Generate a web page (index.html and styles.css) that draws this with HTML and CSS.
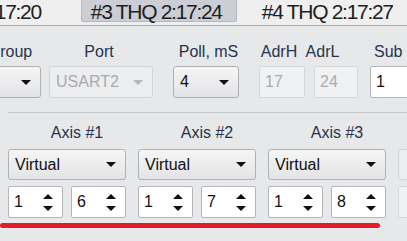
FILE: index.html
```html
<!DOCTYPE html>
<html lang="en">
<head>
  <meta charset="UTF-8">
  <title>THQ device settings</title>
  <link rel="stylesheet" href="styles.css">
</head>
<body>
  <div class="tabbar">
    <div class="tab first">#2 THQ 2:17:20</div>
    <div class="tab active">#3 THQ 2:17:24</div>
    <div class="tab last">#4 THQ 2:17:27</div>
  </div>

  <div class="labels">
    <div class="lbl l-group">Group</div>
    <div class="lbl l-port">Port</div>
    <div class="lbl l-poll">Poll, mS</div>
    <div class="lbl l-adrh">AdrH</div>
    <div class="lbl l-adrl">AdrL</div>
    <div class="lbl l-sub">Sub</div>
  </div>

  <div class="controls">
    <div class="combo c-group"><span class="val"></span><span class="caret"></span></div>
    <div class="combo disabled c-port"><span class="val">USART2</span><span class="caret"></span></div>
    <div class="combo c-poll"><span class="val">4</span><span class="caret"></span></div>
    <div class="field disabled c-adrh">17</div>
    <div class="field disabled c-adrl">24</div>
    <div class="spin c-sub"><span class="val">1</span><span class="arrows"><i class="up"></i><i class="down"></i></span></div>
  </div>

  <div class="group">
    <div class="axes">
      <div class="axis">
        <div class="axis-title">Axis #1</div>
        <div class="combo wide"><span class="val">Virtual</span><span class="caret"></span></div>
        <div class="pair">
          <div class="spin"><span class="val">1</span><span class="arrows"><i class="up"></i><i class="down"></i></span></div>
          <div class="spin"><span class="val">6</span><span class="arrows"><i class="up"></i><i class="down"></i></span></div>
        </div>
      </div>
      <div class="axis">
        <div class="axis-title">Axis #2</div>
        <div class="combo wide"><span class="val">Virtual</span><span class="caret"></span></div>
        <div class="pair">
          <div class="spin"><span class="val">1</span><span class="arrows"><i class="up"></i><i class="down"></i></span></div>
          <div class="spin"><span class="val">7</span><span class="arrows"><i class="up"></i><i class="down"></i></span></div>
        </div>
      </div>
      <div class="axis">
        <div class="axis-title">Axis #3</div>
        <div class="combo wide"><span class="val">Virtual</span><span class="caret"></span></div>
        <div class="pair">
          <div class="spin"><span class="val">1</span><span class="arrows"><i class="up"></i><i class="down"></i></span></div>
          <div class="spin"><span class="val">8</span><span class="arrows"><i class="up"></i><i class="down"></i></span></div>
        </div>
      </div>
      <div class="axis off">
        <div class="axis-title">Axis #4</div>
        <div class="combo wide disabled"><span class="val"></span><span class="caret"></span></div>
        <div class="pair">
          <div class="spin disabled"><span class="val"></span><span class="arrows"><i class="up"></i><i class="down"></i></span></div>
        </div>
      </div>
    </div>
    <div class="underline"></div>
  </div>
</body>
</html>
```

FILE: styles.css
```css
body {
  margin: 0;
  width: 407px;
  height: 241px;
  overflow: hidden;
  background-color: #e7e8ea;
  font-family: 'Liberation Sans', Arial, sans-serif;
  color: #1a1a1a;
}

/* tab strip */
.tabbar {
  display: flex;
  height: 25px;
  background-color: #efeff0;
  border-bottom: 1px solid #a9adb3;
  white-space: nowrap;
}
.tab {
  flex-shrink: 0;
  box-sizing: border-box;
  height: 22px;
  font-size: 21px;
  letter-spacing: -1.3px;
  line-height: 24px;
  color: #202020;
}
.tab.first {
  margin-left: -90px;
  margin-right: 16px;
  padding-right: 24px;
}
.tab.active {
  width: 156px;
  padding-left: 9px;
  background-color: #cbced5;
  border: 1px solid #b4b8bf;
  border-top: none;
  border-radius: 0 0 3px 3px;
}
.tab.last {
  margin-left: 25px;
}

/* header labels */
.labels {
  display: flex;
  margin-top: 17px;
  height: 18px;
  font-size: 16px;
  line-height: 18px;
  color: #26334d;
  white-space: nowrap;
}
.lbl {
  flex-shrink: 0;
  text-align: center;
}
.l-group { width: 54px; margin-left: -17px; }
.l-port { width: 124px; }
.l-poll { width: 95px; }
.l-adrh { width: 46px; }
.l-adrl { width: 41px; }
.l-sub { text-align: left; padding-left: 31px; }

/* common widgets */
.controls {
  display: flex;
  margin-top: 5px;
  height: 32px;
}
.combo, .field, .spin {
  flex-shrink: 0;
  box-sizing: border-box;
  display: flex;
  align-items: center;
  font-size: 16px;
  color: #111;
  white-space: nowrap;
}
.combo {
  height: 32px;
  padding: 0 9px 0 6px;
  background: linear-gradient(#f5f5f5, #e3e4e6);
  border: 1px solid #aeb0b4;
  border-radius: 3px;
}
.combo .val {
  flex: 1;
}
.caret {
  width: 0;
  height: 0;
  border-left: 5px solid transparent;
  border-right: 5px solid transparent;
  border-top: 5px solid #111;
}
.field {
  height: 32px;
  padding: 0 5px;
  background-color: #fff;
  border: 1px solid #b3b5b9;
  border-radius: 2px;
}
.spin {
  height: 32px;
  padding: 0 9px 0 5px;
  background-color: #fff;
  border: 1px solid #b3b5b9;
  border-radius: 2px;
}
.spin .val {
  flex: 1;
}
.arrows {
  display: flex;
  flex-direction: column;
  gap: 7px;
}
.arrows i {
  display: block;
  width: 0;
  height: 0;
  border-left: 5px solid transparent;
  border-right: 5px solid transparent;
}
.arrows .up { border-bottom: 5px solid #111; }
.arrows .down { border-top: 5px solid #111; }

.disabled {
  color: #a9abae;
}
.combo.disabled {
  background: #ecedee;
  border-color: #d2d4d7;
}
.combo.disabled .caret { border-top-color: #b4b6b9; }
.field.disabled, .spin.disabled {
  background-color: #f0f1f2;
  border-color: #d5d7da;
}
.spin.disabled .up { border-bottom-color: #c0c2c5; }
.spin.disabled .down { border-top-color: #c0c2c5; }

.c-group { width: 53px; margin-left: -12px; }
.c-port { width: 104px; margin-left: 8px; }
.c-poll { width: 66px; margin-left: 20px; }
.c-adrh { width: 46px; margin-left: 20px; }
.c-adrl { width: 44px; margin-left: 9px; }
.c-sub { width: 62px; margin-left: 12px; }

/* axis group */
.group {
  margin: 14px 0 0 8px;
  border-top: 1px solid #c3c6ca;
}
.axes {
  display: flex;
  gap: 12px;
  margin-top: 10px;
}
.axis {
  flex-shrink: 0;
  width: 118px;
}
.axis-title {
  height: 20px;
  padding-left: 20px;
  text-align: center;
  font-size: 16px;
  line-height: 20px;
  color: #26334d;
  white-space: nowrap;
}
.off .axis-title { visibility: hidden; }
.combo.wide {
  width: 118px;
  height: 31px;
  margin-top: 6px;
}
.pair {
  display: flex;
  gap: 8px;
  margin-top: 6px;
}
.pair .spin {
  width: 55px;
}
.underline {
  width: 372px;
  height: 5px;
  margin: 5px 0 0 -8px;
  padding-left: 8px;
  background-color: #e21d26;
  border-radius: 3px;
}
```
